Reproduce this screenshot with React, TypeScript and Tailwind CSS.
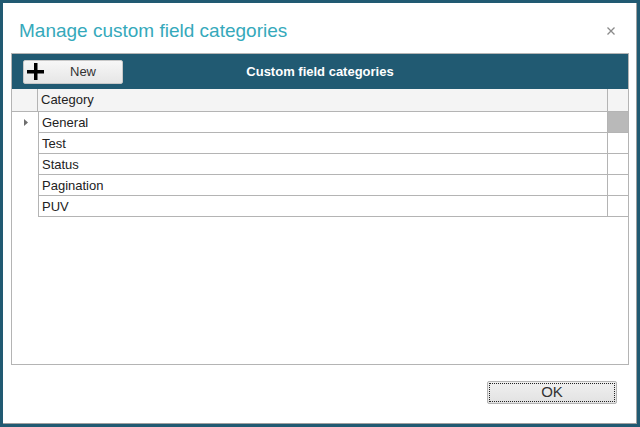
import React from 'react';

const categories = ['General', 'Test', 'Status', 'Pagination', 'PUV'];

const App: React.FC = () => {
  return (
    <div className="w-[640px] h-[427px] bg-[#215a72] p-[3px] font-['Liberation_Sans',Arial,sans-serif]">
      <div className="w-[634px] h-[421px] bg-white border-r border-b border-[#a0a0a0] flex flex-col">
        {/* title */}
        <div className="h-[50px] flex items-start justify-between pl-[16px] pr-[20px] pt-[16px]">
          <h1 className="text-[19px] leading-[24px] text-[#35a9bb]">Manage custom field categories</h1>
          <button className="mt-[7px] w-[10px] h-[10px] flex items-center justify-center">
            <svg width="8" height="8" viewBox="0 0 8 8">
              <path d="M0.5 0.5 L7.5 7.5 M7.5 0.5 L0.5 7.5" stroke="#8a8a8a" strokeWidth="1.3" />
            </svg>
          </button>
        </div>

        {/* grid panel */}
        <div className="ml-[8px] w-[618px] h-[312px] border border-[#b4b4b4] flex flex-col">
          <div className="h-[35px] bg-[#215a72] grid grid-cols-[1fr_auto_1fr] items-center">
            <div className="pl-[11px]">
              <button className="w-[100px] h-[24px] rounded-[2px] border border-[#c8c8c8] bg-gradient-to-b from-[#f7f7f7] to-[#e6e6e6] flex items-center">
                <svg className="ml-[3px]" width="17" height="17" viewBox="0 0 17 17">
                  <rect x="7" y="0" width="3.5" height="17" fill="#000" />
                  <rect x="0" y="7" width="17" height="3.5" fill="#000" />
                </svg>
                <span className="ml-[26px] text-[13px] text-[#333]">New</span>
              </button>
            </div>
            <div className="text-white font-bold text-[13px]">Custom field categories</div>
            <div />
          </div>

          <div className="h-[23px] bg-[#f4f4f4] border-b border-[#b4b4b4] flex text-[13px] text-[#222]">
            <div className="w-[26px] border-r border-[#b4b4b4]" />
            <div className="flex-1 border-r border-[#b4b4b4] pl-[3px] leading-[22px]">Category</div>
            <div className="w-[20px]" />
          </div>

          {categories.map((c, i) => (
            <div key={c} className="h-[21px] flex text-[13px] text-[#222]">
              <div className="w-[26px] flex items-center pl-[12px]">
                {i === 0 && (
                  <svg width="4" height="7" viewBox="0 0 4 7">
                    <path d="M0 0 L4 3.5 L0 7 Z" fill="#6e6e6e" />
                  </svg>
                )}
              </div>
              <div className="flex-1 flex border-l border-b border-[#b4b4b4]">
                <div className="flex-1 border-r border-[#b4b4b4] pl-[3px] pt-[1px] leading-[20px]">{c}</div>
                <div className={`w-[20px] ${i === 0 ? 'bg-[#b9b9b9]' : ''}`} />
              </div>
            </div>
          ))}
        </div>

        <div className="flex justify-end pr-[19px] mt-[16px]">
          <button className="w-[130px] h-[23px] rounded-[2px] border border-[#b4b4b4] bg-gradient-to-b from-[#f0f0f0] to-[#e2e2e2] p-[1px]">
            <div className="w-full h-full border border-dotted border-[#222] flex items-center justify-center text-[15px] text-[#333]">
              OK
            </div>
          </button>
        </div>
      </div>
    </div>
  );
};

export default App;
